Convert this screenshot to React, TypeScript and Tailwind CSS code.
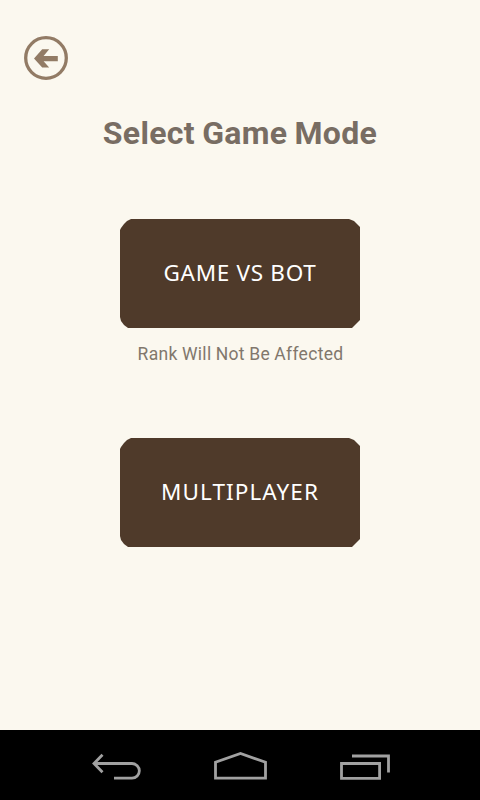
function BackIcon() {
  return (
    <svg width="44" height="44" viewBox="0 0 44 44" className="block" aria-hidden="true">
      <circle cx="22" cy="22" r="20.3" fill="none" stroke="#927b65" strokeWidth="3.3" />
      <path d="M10 22.4 L18.2 13.2 H25.2 L19.6 19.9 H33.8 V25.2 H19.6 L25.2 31.4 H18.2 Z" fill="#927b65" />
    </svg>
  );
}

function ModeButton({ label, className }: { label: string; className: string }) {
  return (
    <button
      type="button"
      className="flex h-[109px] w-60 items-center justify-center bg-[#4f3a2a] text-white [clip-path:polygon(0_11px,1px_9px,4px_5px,7px_2px,11px_0,229px_0,234px_2px,240px_8px,240px_101px,232px_109px,8px_109px,4px_106px,1px_102px,0_98px)]"
    >
      <span className={className}>{label}</span>
    </button>
  );
}

export default function App() {
  return (
    <div className="flex h-[800px] w-[480px] flex-col bg-[#fbf8ef] font-['Noto_Sans',sans-serif]">
      <main className="flex flex-1 flex-col items-center">
        <header className="mt-9 flex h-11 w-full pl-6">
          <button type="button" aria-label="Back">
            <BackIcon />
          </button>
        </header>
        <h1 className="mt-8 h-[42px] font-[Roboto,sans-serif] text-[32px] leading-[43px] font-bold tracking-[0.3px] whitespace-nowrap text-[#786d63] [word-spacing:-1px]">
          Select Game Mode
        </h1>
        <div className="mt-[65px] flex flex-col items-center">
          <ModeButton
            label="GAME VS BOT"
            className="-mt-[2px] text-[22.5px] tracking-[0.7px] whitespace-nowrap"
          />
          <p className="mt-3 h-7 pl-px font-[Roboto,sans-serif] text-[17.5px] leading-[29px] tracking-[0.3px] whitespace-nowrap text-[#81776c] [word-spacing:-0.3px]">
            Rank Will Not Be Affected
          </p>
        </div>
        <div className="mt-[70px]">
          <ModeButton
            label="MULTIPLAYER"
            className="-mt-[2px] text-[22.5px] tracking-[1.1px] whitespace-nowrap"
          />
        </div>
      </main>
      <nav className="flex h-[70px] items-center bg-black pl-[90px] text-[#a1a1a1]">
        <svg width="54" height="70" viewBox="90 730 54 70" fill="none" stroke="currentColor" strokeWidth="2.8">
          <path d="M94 763.5 H132 A7.3 7.3 0 0 1 132 778.2 H114" />
          <path d="M102.5 754.8 L94 763.5 L102.5 772.2" />
        </svg>
        <svg className="ml-[68px]" width="58" height="70" viewBox="212 730 58 70" fill="none" stroke="currentColor" strokeWidth="2.8">
          <path d="M215.5 778.2 V762.3 L240.5 753.5 L265.5 762.3 V778.2 Z" />
        </svg>
        <svg className="ml-[68px]" width="54" height="70" viewBox="338 730 54 70" fill="none" stroke="currentColor" strokeWidth="2.8">
          <path d="M341.5 763.5 H379.6 V778.3 H341.5 Z M352 756 H388.5 V772.5" />
        </svg>
      </nav>
    </div>
  );
}
